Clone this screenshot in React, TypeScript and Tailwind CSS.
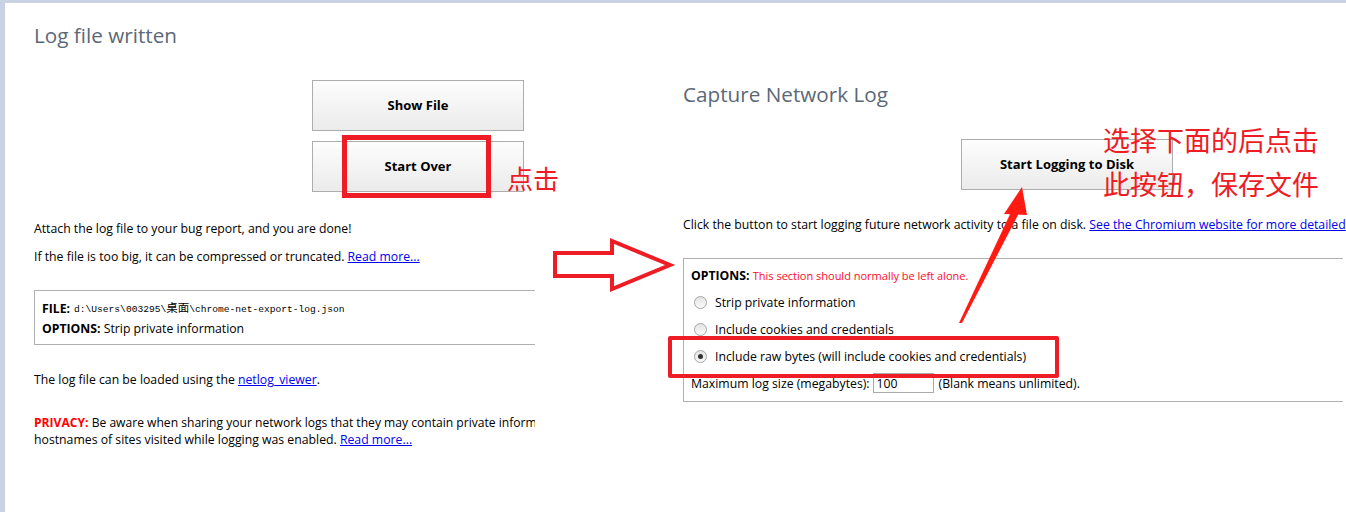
import React from "react";

const Radio = ({ checked }: { checked?: boolean }) => (
  <span className="relative inline-flex h-[13px] w-[13px] shrink-0 items-center justify-center rounded-full border border-[#a6a6a6] bg-gradient-to-b from-[#e4e4e4] to-[#fafafa]">
    {checked && <span className="h-[5px] w-[5px] rounded-full bg-[#333]" />}
  </span>
);

const Btn = ({ children }: { children: React.ReactNode }) => (
  <div className="flex h-[51px] w-[212px] items-center justify-center border border-[#adadad] bg-gradient-to-b from-[#fdfdfd] to-[#ebebeb] text-[13px] font-bold text-black">
    {children}
  </div>
);

export default function App() {
  return (
    <div className="relative flex h-[512px] w-[1346px] overflow-hidden bg-white font-['Open_Sans','Noto_Sans',sans-serif] text-[12.25px] text-black">
      <div className="flex flex-1 flex-col">
        <div className="h-[3px] bg-[#c9d3e4]" />
        <div className="flex flex-1">
          <div className="w-[5px] bg-[#c9d3e4]" />
          {/* Left panel */}
          <div className="w-[530px] overflow-hidden pl-[29px]">
            <div className="mt-[18px] whitespace-nowrap text-[20.7px] leading-[28px] text-[#5b6877]">Log file written</div>
            <div className="mt-[31px] flex flex-col gap-[10px] pl-[278px]">
              <Btn>Show File</Btn>
              <Btn>Start Over</Btn>
            </div>
            <div className="mt-[29px] whitespace-nowrap leading-[16px]">Attach the log file to your bug report, and you are done!</div>
            <div className="mt-[12px] whitespace-nowrap leading-[16px]">
              If the file is too big, it can be compressed or truncated.{" "}
              <span className="text-[#0000ee] underline">Read more...</span>
            </div>
            <div className="mt-[25px] w-[510px] border border-r-0 border-[#b0b0b0] px-[7px] pb-[5px] pt-[7px]">
              <div className="flex items-center whitespace-nowrap leading-[18px]">
                <span className="font-bold">FILE:</span>
                <span className="ml-[4px] font-['Liberation_Mono','Noto_Sans_CJK_SC',monospace] text-[9.6px]">
                  d:\Users\003295\<span className="font-['Noto_Sans_CJK_SC',sans-serif] text-[11.5px]">桌面</span>\chrome-net-export-log.json
                </span>
              </div>
              <div className="whitespace-nowrap leading-[20px]">
                <span className="font-bold">OPTIONS:</span> Strip private information
              </div>
            </div>
            <div className="mt-[27px] whitespace-nowrap leading-[16px]">
              The log file can be loaded using the <span className="text-[#0000ee] underline">netlog_viewer</span>.
            </div>
            <div className="mt-[26px] whitespace-nowrap text-[12.1px] leading-[17px]">
              <span className="font-bold text-[#ff0000]">PRIVACY:</span> Be aware when sharing your network logs that they may contain private inform
            </div>
            <div className="whitespace-nowrap leading-[17px]">
              hostnames of sites visited while logging was enabled.{" "}
              <span className="text-[#0000ee] underline">Read more...</span>
            </div>
          </div>
          <div className="w-[148px]" />
          {/* Right panel */}
          <div className="flex-1 overflow-hidden">
            <div className="mt-[77px] whitespace-nowrap text-[20.7px] leading-[28px] text-[#5b6877]">Capture Network Log</div>
            <div className="mt-[31px] pl-[278px]">
              <Btn>Start Logging to Disk</Btn>
            </div>
            <div className="mt-[27px] whitespace-nowrap leading-[16px]">
              Click the button to start logging future network activity to a file on disk.{" "}
              <span className="text-[#0000ee] underline">See the Chromium website for more detailed</span>
            </div>
            <div className="mt-[25px] w-[660px] border border-r-0 border-[#b0b0b0] px-[7px] pb-[8px] pt-[8px]">
              <div className="whitespace-nowrap leading-[17px]">
                <span className="font-bold">OPTIONS:</span>{" "}
                <span className="text-[11px] text-[#ff0a28]">This section should normally be left alone.</span>
              </div>
              <div className="mt-[10px] flex flex-col gap-[10px]">
                <label className="flex items-center gap-[8px] pl-[3px] leading-[17px]">
                  <Radio /> <span>Strip private information</span>
                </label>
                <label className="flex items-center gap-[8px] pl-[3px] leading-[17px]">
                  <Radio /> <span>Include cookies and credentials</span>
                </label>
                <label className="flex items-center gap-[8px] pl-[3px] leading-[17px]">
                  <Radio checked /> <span>Include raw bytes (will include cookies and credentials)</span>
                </label>
              </div>
              <div className="mt-[8px] flex items-center whitespace-nowrap leading-[19px]">
                <span>Maximum log size (megabytes):</span>
                <span className="ml-[3px] flex h-[20px] w-[61px] items-center border border-[#aaa] px-[3px]">100</span>
                <span className="ml-[5px]">(Blank means unlimited).</span>
              </div>
            </div>
          </div>
        </div>
      </div>
      {/* Scrollbar */}
      <div className="flex w-[3px] flex-col bg-[#f0f0f0]">
        <div className="h-[15px]" />
        <div className="h-[330px] bg-[#c3c3c3]" />
      </div>

      {/* Annotations */}
      <div className="pointer-events-none absolute left-[342px] top-[135px] h-[63px] w-[149px] border-[5px] border-[#ee1c25]" />
      <div className="pointer-events-none absolute left-[668px] top-[336px] h-[42px] w-[391px] rounded-[2px] border-[4px] border-[#ee1c25]" />
      <div className="pointer-events-none absolute left-[507px] top-[160px] font-['Noto_Sans_CJK_SC',sans-serif] text-[26px] leading-[36px] text-[#ee1c25]">点击</div>
      <div className="pointer-events-none absolute left-[1103px] top-[118px] font-['Noto_Sans_CJK_SC',sans-serif] text-[27px] leading-[44px] text-[#ee1c25]">
        <div>选择下面的后点击</div>
        <div>此按钮，保存文件</div>
      </div>
      <svg className="pointer-events-none absolute left-0 top-0" width="1346" height="512">
        <polygon points="555,253 612,253 612,241 670,265 612,289 612,276 555,276" fill="none" stroke="#ee1c25" strokeWidth="4" strokeLinejoin="miter" />
        <polygon points="959,323 962,323 1019,213 1012,210" fill="#ff1a12" />
        <polygon points="1022,187 1004,214 1027,215" fill="#ff1a12" />
      </svg>
    </div>
  );
}
